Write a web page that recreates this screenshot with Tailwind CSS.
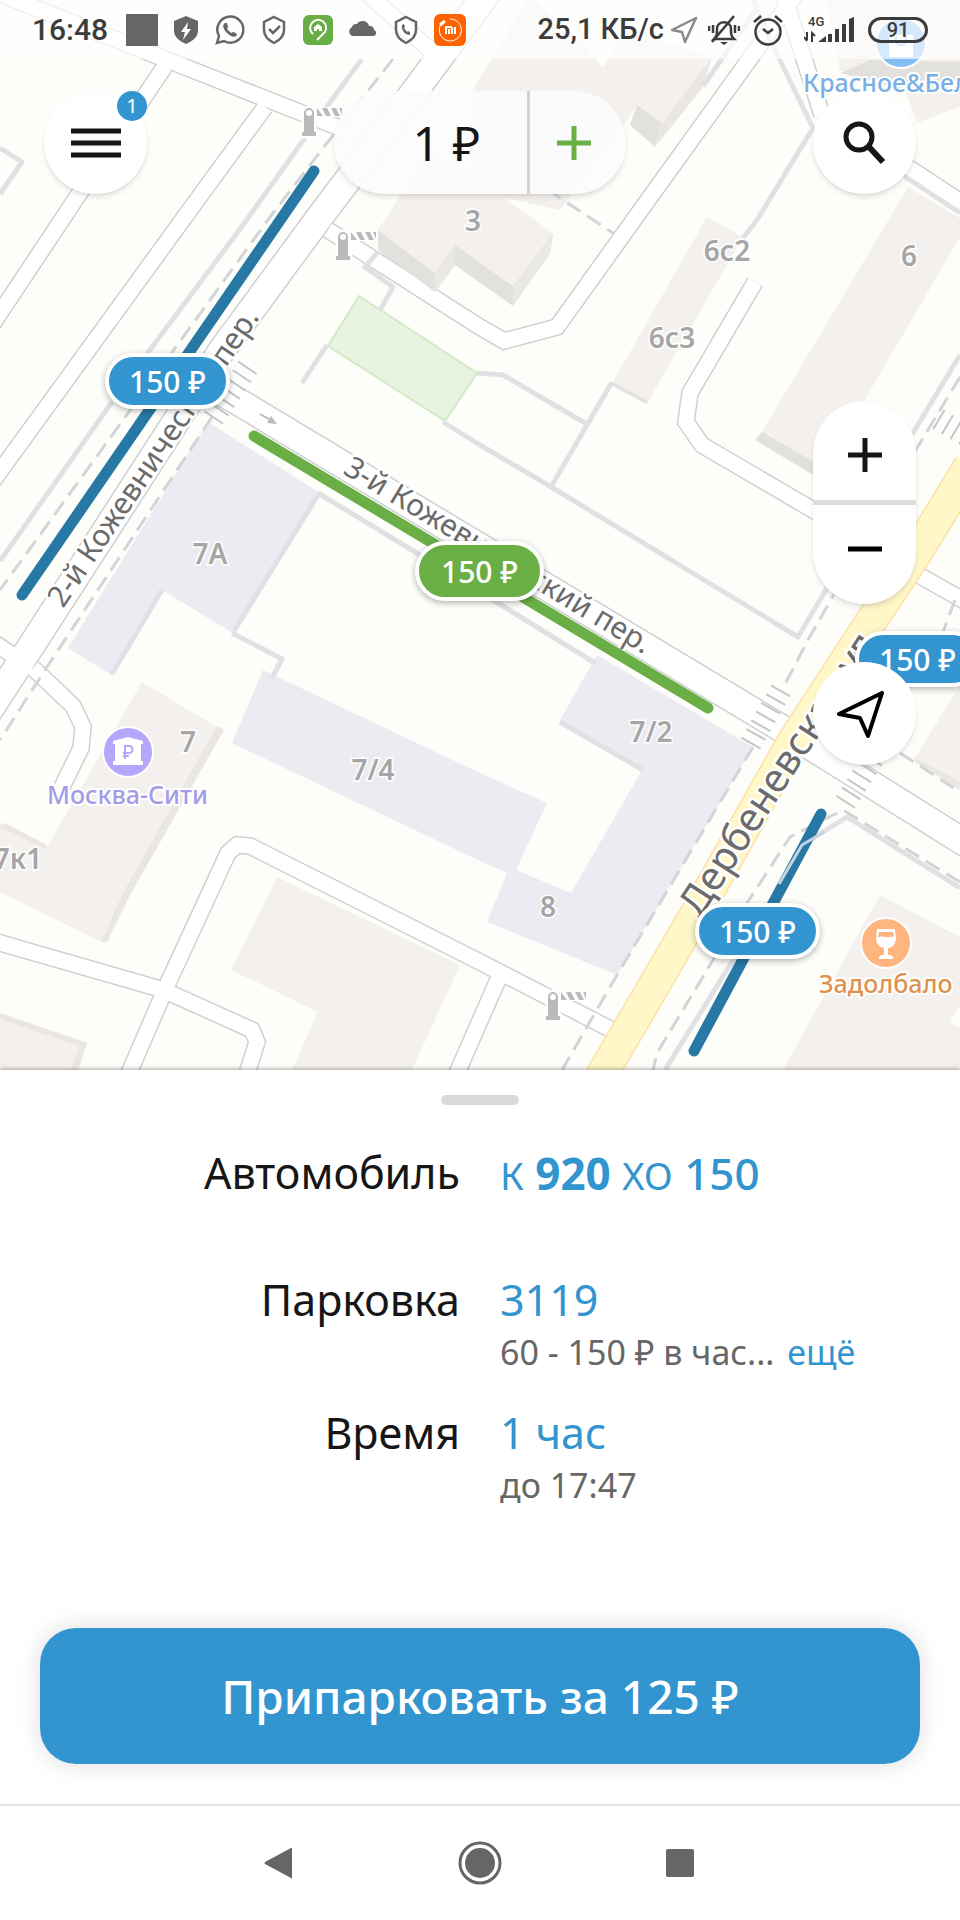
<!DOCTYPE html>
<html lang="ru">
<head>
    <meta charset="UTF-8">
    <meta name="viewport" content="width=device-width, initial-scale=1.0">
    <title>Парковки</title>
    <script src="https://cdn.jsdelivr.net/npm/@tailwindcss/browser@4"></script>
</head>
<body class="bg-white font-['Noto_Sans','Open_Sans',sans-serif] text-[#161616]">
<div class="flex min-h-screen flex-col">

    <!-- Карта -->
    <section class="relative min-h-[1070px] grow overflow-hidden bg-[#fdfefa]" aria-label="Карта парковок">
        <div class="absolute inset-y-0 left-1/2 w-[960px] -translate-x-1/2">
            <svg class="block h-[1070px] w-[960px]" viewBox="0 0 960 1070" fill="none">
                <defs>
                    <symbol id="barrier" viewBox="0 0 42 32" overflow="visible">
                        <path d="M3 26V7a5 5 0 0 1 10 0v19h2v4H1v-4z" fill="#b9babc" stroke="#fff" stroke-width="5" paint-order="stroke"/>
                        <circle cx="8" cy="7" r="3" fill="#fff"/>
                        <path d="M15 1h27v10H15z" fill="#fff"/>
                        <path d="M16 2v8h6zM21 2h5l4 8h-5zM30 2h5l4 8h-5zM38 2h3v7z" fill="#b9babc"/>
                    </symbol>
                    <g id="lanes">
                        <path d="M-10 -10 185 67 350 132"/>
                        <path d="M165 66 75 200-10 328"/>
                        <path d="M265 107 197 200-10 485"/>
                        <path d="M-10 640 20 660"/>
                        <path d="M33 668 73 706 83 727 81 748 62 787"/>
                        <path d="M328 230 480 327 504 341 557 327 648 200 749 60 795-5"/>
                        <path d="M755 282 690 393 686 422 702 445 813 510 840 525"/>
                        <path d="M915 573 970 604"/>
                        <path d="M-10 940 157 988 172 994 252 1030 257 1042 245 1080"/>
                        <path d="M126 1080 168 983 228 853 237 845 250 846 480 962 612 1030"/>
                        <path d="M454 1080 500 975"/>
                        <path d="M782-10 822 115"/>
                        <path d="M900 162 970 208"/>
                        <path d="M330-40 430 50"/>
                    </g>
                    <g id="streets">
                        <path d="M500-24 414 92 319 218 222 350 35 640-30 740"/>
                        <path d="M212 386 480 547 786 731 970 846"/>
                    </g>
                </defs>

                <!-- Здания -->
                <g fill="#f4f0ed">
                    <path d="M470 95 530-5 585 45 603 68 625 30 712 57 662 123 637 105 620 130 560 210 470 190z"/>
                    <path d="M707 217 743 237 648 402 613 382z"/>
                    <path d="M908 187 960 218 960 237 825 468 762 432z"/>
                    <path d="M825-5H965V105L917 123 905 90 840 70z"/>
                    <path d="M142 682 217 727 102 942 0 892V823L47 847z"/>
                    <path d="M0 1013 87 1043 78 1070H0z"/>
                    <path d="M277 877 460 965 412 1070H292L318 1012 231 970z"/>
                    <path d="M880 895 960 937V1005L950 1022 960 1028V1070H783z"/>
                    <path d="M915 758 960 685V785z"/>
                </g>
                <g fill="#e3e1de">
                    <path d="M637 105 662 123 655 147 630 125z"/>
                    <path d="M762 432 755 440 818 478 825 468z"/>
                    <path d="M613 382 611 385 646 404 648 401z"/>
                    <path d="M840 73 870 60 960 62V80L905 90z"/>
                </g>
                <g fill="#e9e6e3">
                    <path d="M662 123 712 57 703 87 655 147z"/>
                    <path d="M217 726 224 730 130 895 107 942H101L123 893z"/>
                    <path d="M0 1013 87 1043 78 1070H71L79 1046 0 1019z"/>
                    <path d="M5 823 47 845 46 849 0 827z"/>
                    <path d="M915 758 960 781V790L915 762z"/>
                </g>
                <g fill="#ebebf1">
                    <path d="M208 422 320 493 233 633 162 590 112 675 68 648z"/>
                    <path d="M263 670 480 773 547 803 516 870 571 893 642 770 560 720 597 655 753 747 617 975 487 922 507 873 480 861 232 743z"/>
                </g>
                <path d="M318 495 234 631M162 590 112 674M560 722 643 770" stroke="#e0e0e5" stroke-width="5"/>
                <path d="M359 296 477 373 445 421 328 346z" fill="#e8f3e1" stroke="#d1eac5" stroke-width="2"/>

                <!-- Дороги: контур, затем полотно -->
                <use href="#lanes" stroke="#d0d0d3" stroke-width="18"/>
                <use href="#streets" stroke="#d0d0d3" stroke-width="29"/>
                <use href="#lanes" stroke="#fff" stroke-width="15"/>
                <use href="#streets" stroke="#fff" stroke-width="26"/>
                <path d="M600 1078 698 910 792 743 872 620 917 552 970 465" stroke="#ffdfa6" stroke-width="33"/>
                <path d="M600 1078 698 910 792 743 872 620 917 552 970 465" stroke="#fff7c8" stroke-width="30"/>

                <!-- Здание 3 стоит поверх проезда -->
                <path d="M378 230 430 150 480 180 507 200 553 233 513 286 455 245 435 273z" fill="#f4f0ed"/>
                <path d="M378 230V250L435 292 455 265 513 306 550 253 553 233 513 286 455 245 435 273z" fill="#e3e1de"/>
                <path d="M435 273 455 245V265L435 292zM513 286 553 233 550 253 513 306z" fill="#e9e8e5"/>

                <!-- Заборы -->
                <g stroke="#e1e0e4" stroke-width="5" stroke-linejoin="round">
                    <path d="M362 59 325 109M307 135 243 225 147 354M112 402 0 561"/>
                    <path d="M0 148 22 162 0 194"/>
                    <path d="M378 252 365 267 393 287 380 310"/>
                    <path d="M327 345 302 383"/>
                    <path d="M443 422 480 445 548 485 798 637 827 588"/>
                    <path d="M477 373 503 375 585 423M612 382 552 485"/>
                    <path d="M743 238 757 220 813 128 775 50 753 0M758 7 703 86"/>
                    <path d="M318 493 420 555 595 663"/>
                    <path d="M232 633 282 659 272 678"/>
                    <path d="M960 355 913 433 845 545"/>
                    <path d="M904 176 960 213"/>
                    <path d="M960 888 847 817 802 845 768 905 730 965 665 1070"/>
                </g>

                <!-- Тротуары -->
                <g stroke="#d2d5d7" stroke-width="3" stroke-dasharray="16 8">
                    <path d="M393 59 327 143 270 217 0 590"/>
                    <path d="M212 417 45 670 0 740"/>
                    <path d="M528 175 563 200 613 233"/>
                    <path d="M960 377 917 448 808 640 782 690"/>
                    <path d="M753 747 617 975 562 1070"/>
                    <path d="M960 882 843 810 790 837 747 903 713 960 657 1053 653 1070"/>
                    <path d="M900 753 960 792M955 600 938 645"/>
                </g>

                <!-- Пешеходные переходы -->
                <path d="M248 367 211 422M781 690 750 745M884 742 843 806M938 419 975 441" stroke="#c0c7cb" stroke-width="22" stroke-dasharray="2 8"/>
                <path d="M260 414 274 422" stroke="#b9babc" stroke-width="2"/>
                <path d="M277 424 267 423 271 416z" fill="#b9babc"/>

                <use href="#barrier" x="301" y="106" width="42" height="32"/>
                <use href="#barrier" x="335" y="230" width="42" height="32"/>
                <use href="#barrier" x="545" y="990" width="42" height="32"/>

                <!-- Улицы -->
                <g fill="#6b6b6b" stroke="#fff" stroke-width="5" stroke-linejoin="round" paint-order="stroke" font-size="30">
                    <text transform="translate(63 609) rotate(-56)">2-й Кожевнический пер.</text>
                    <text transform="translate(342 473) rotate(31)">3-й Кожевнический пер.</text>
                    <text transform="translate(700 919) rotate(-57)" font-size="40">Дербеневская ул.</text>
                </g>

                <!-- Парковочные зоны -->
                <g stroke-width="11" stroke-linecap="round">
                    <path d="M314 171 22 595M821 814 694 1051" stroke="#2778a5"/>
                    <path d="M254 436 708 708" stroke="#6aaf45"/>
                </g>
                <path d="M824 832 802 845 779 884" stroke="#c5d5e0" stroke-width="3"/>

                <!-- Подписи домов -->
                <g fill="#a6a6a6" stroke="#fff" stroke-width="3" paint-order="stroke" font-size="28" font-weight="600" text-anchor="middle">
                    <text x="473" y="231">3</text>
                    <text x="727" y="261">6с2</text>
                    <text x="672" y="348">6с3</text>
                    <text x="909" y="266">6</text>
                    <text x="210" y="564">7А</text>
                    <text x="188" y="752">7</text>
                    <text x="373" y="780">7/4</text>
                    <text x="651" y="742">7/2</text>
                    <text x="548" y="917">8</text>
                    <text x="18" y="869">7к1</text>
                </g>

                <!-- Организации -->
                <g stroke="#fff" stroke-width="2">
                    <circle cx="128" cy="752" r="25" fill="#b5a5fb"/>
                    <circle cx="886" cy="943" r="25" fill="#ffb580"/>
                    <circle cx="901" cy="43" r="25" fill="#87bdf5"/>
                </g>
                <path d="M113 744V741L128 737 143 741V744H141V761H143V765H113V761H115V744z" fill="#fff"/>
                <path d="M125 759V746H129a3 3 0 0 1 0 7H123M123 756H129" stroke="#b5a5fb" stroke-width="2"/>
                <path d="M877 929H895L896 938C896 944 892 948 888 948V955C892 955 893 956 893 959H879C879 956 880 955 884 955V948C880 948 876 944 876 938zM879 932 878 937C882 935 889 939 894 936L893 932z" fill="#fff" fill-rule="evenodd"/>
                <path d="M889 35H913V57H889z" fill="#fff"/>
                <path d="M896 36V40a5 5 0 0 0 10 0V36" stroke="#87bdf5" stroke-width="2"/>
                <g stroke="#fff" stroke-width="4" stroke-linejoin="round" paint-order="stroke" font-size="25" font-weight="500">
                    <text x="47" y="804" fill="#a49be8">Москва-Сити</text>
                    <text x="819" y="993" fill="#dc9350">Задолбало</text>
                    <text x="803" y="92" fill="#7ab0e5">Красное&amp;Бел</text>
                </g>
            </svg>

            <!-- Цены на карте -->
            <button class="absolute left-[105px] top-[353px] h-14 w-[125px] rounded-full border-4 border-white bg-[#3295cf] pt-px text-3xl leading-none font-medium text-white shadow-[0_2px_6px_rgba(0,0,0,0.3)]">150 ₽</button>
            <button class="absolute left-[415px] top-[541px] h-[60px] w-[129px] rounded-full border-4 border-white bg-[#6aaf45] pt-px text-3xl leading-none font-medium text-white shadow-[0_2px_6px_rgba(0,0,0,0.3)]">150 ₽</button>
            <button class="absolute left-[695px] top-[903px] h-14 w-[125px] rounded-full border-4 border-white bg-[#3295cf] pt-px text-3xl leading-none font-medium text-white shadow-[0_2px_6px_rgba(0,0,0,0.3)]">150 ₽</button>
            <button class="absolute left-[855px] top-[631px] h-14 w-[125px] rounded-full border-4 border-white bg-[#3295cf] pt-px text-3xl leading-none font-medium text-white shadow-[0_2px_6px_rgba(0,0,0,0.3)]">150 ₽</button>
        </div>

        <!-- Элементы управления поверх карты -->
        <div class="relative">
            <div class="flex h-[59px] items-center justify-between bg-white/65 px-8 font-[Roboto,sans-serif] text-[#3c3c3c]">
                <div class="flex items-center gap-3">
                    <span class="mr-1.5 text-[30px] leading-none font-medium">16:48</span>
                    <span class="size-8 bg-[#666]"></span>
                    <svg class="size-8" viewBox="0 0 32 32"><path d="M16 2 28 7v9c0 7-5 11-12 14C9 27 4 23 4 16V7z" fill="#666"/><path d="M18 8 11 18h4l-2 8 8-11h-4z" fill="#fff"/></svg>
                    <svg class="size-8" viewBox="0 0 32 32" fill="none"><path d="M3 29l2-7a13 13 0 1 1 5 5z" stroke="#666" stroke-width="2.5"/><path d="M11 9c-3 2-2 6 2 10s8 5 10 2l-1-2-3-1-2 1-4-4 1-2-1-4z" fill="#666"/></svg>
                    <svg class="size-8" viewBox="0 0 32 32" fill="none" stroke="#666" stroke-width="2.5"><path d="M16 3 26 8v8c0 6-4 10-10 13C10 26 6 22 6 16V8z"/><path d="M11 15l4 4 7-7"/></svg>
                    <svg class="size-8" viewBox="0 0 32 32" fill="none"><rect x="1" y="1" width="30" height="30" rx="6" fill="#68ad45"/><path d="M11 20a8 8 0 1 1 12-2l-8 8" stroke="#fff" stroke-width="2"/><path d="M16 10l4 3v4h-3v-2h-2v2h-3v-4z" fill="#fff"/></svg>
                    <svg class="size-8" viewBox="0 0 32 32"><path d="M6 22a5 5 0 0 1 0-9c1-3 3-3 5-3 3-5 11-3 12 2 4 0 5 2 5 4 3 1 3 6-1 6z" fill="#666"/></svg>
                    <svg class="size-8" viewBox="0 0 32 32" fill="none"><path d="M16 3 26 8v8c0 6-4 10-10 13C10 26 6 22 6 16V8z" stroke="#666" stroke-width="2.5"/><path d="M12 11c-1 5 3 10 8 10v-3l-2-1-1 1-3-4 1-1-1-3z" fill="#666"/></svg>
                    <svg class="size-8" viewBox="0 0 32 32" fill="none" stroke="#fff"><rect width="32" height="32" rx="6" fill="#ff6200" stroke="none"/><path d="M10 7a11 11 0 1 0 6-2" stroke-width="1"/><path d="M6 11l5-4" stroke-width="3"/><path d="M12 20v-7h4q2 0 2 2v5M15 15v5M21 13v7" stroke-width="2"/></svg>
                </div>
                <div class="flex items-center gap-3">
                    <span class="text-[29px] leading-none font-medium">25,1 КБ/с</span>
                    <svg class="-mr-1 -ml-2 size-8" viewBox="0 0 32 32" fill="none"><path d="M28 4 4 16l10 2 3 10z" stroke="#8a8a8a" stroke-width="2.5" stroke-linejoin="round"/></svg>
                    <svg class="size-8" viewBox="0 0 32 32" fill="none" stroke="#3c3c3c" stroke-width="2.5"><path d="M6 25c3-3 3-5 3-10 0-9 14-9 14 0 0 5 0 7 3 10zM26 2 4 28M5 11v8M1 12v5M27 11v8M31 12v5"/><path d="M12 28h8l-4 3z" fill="#3c3c3c" stroke="none"/></svg>
                    <svg class="size-8" viewBox="0 0 32 32" fill="none" stroke="#3c3c3c" stroke-width="2.5"><circle cx="16" cy="18" r="12.5"/><path d="M11 15l5 4 5-4M2 8l7-6M30 8l-7-6"/></svg>
                    <svg class="ml-2 h-8 w-[52px]" viewBox="0 0 52 32" fill="#3c3c3c"><text x="4" y="12" font-size="13" font-weight="500">4G</text><path d="M3 18v8M3 27l-3-4M8 28V19l3 3" fill="none" stroke="#3c3c3c" stroke-width="2"/><path d="M14 28l8-6v6zM24 20h4v8h-4zM31 15h4v13h-4zM38 10h4v18h-4zM45 5l5-2v25h-5z"/></svg>
                    <span class="flex h-[26px] w-[60px] items-center justify-center rounded-full border-[3px] text-xl leading-none font-medium">91</span>
                </div>
            </div>

            <div class="flex justify-between px-11 pt-8">
                <button class="relative flex size-[103px] items-center justify-center rounded-full bg-white shadow-md" aria-label="Меню">
                    <svg class="h-8 w-[50px]" viewBox="0 0 50 32" stroke="#161616" stroke-width="5"><path d="M0 4h50M0 16h50M0 28h50"/></svg>
                    <span class="absolute top-0 right-0 flex size-[30px] items-center justify-center rounded-full bg-[#3295cf] text-xl leading-none text-white">1</span>
                </button>
                <div class="flex h-[103px] w-[292px] rounded-full bg-[#fcfcfc]/90 shadow-md">
                    <button class="grow border-r-[3px] border-[#d3d3d3] pl-8 text-5xl">1 ₽</button>
                    <button class="flex w-[96px] items-center justify-center pr-2" aria-label="Пополнить">
                        <svg class="size-[34px]" viewBox="0 0 34 34" stroke="#6aaf45" stroke-width="5"><path d="M17 0v34M0 17h34"/></svg>
                    </button>
                </div>
                <button class="flex size-[103px] items-center justify-center rounded-full bg-white shadow-md" aria-label="Поиск">
                    <svg class="size-11" viewBox="0 0 44 44" fill="none" stroke="#161616" stroke-width="5"><circle cx="16" cy="16" r="13"/><path d="M26 26 40 41" stroke-width="6"/></svg>
                </button>
            </div>

            <div class="mt-[207px] flex flex-col items-end gap-[58px] px-11">
                <div class="flex w-[103px] flex-col gap-[5px] rounded-full bg-[#dcdcd8] shadow-md">
                    <button class="flex h-[99px] items-center justify-center rounded-t-full bg-white pt-2" aria-label="Приблизить">
                        <svg class="size-[34px]" viewBox="0 0 34 34" stroke="#161616" stroke-width="5"><path d="M17 0v34M0 17h34"/></svg>
                    </button>
                    <button class="flex h-[99px] items-center justify-center rounded-b-full bg-white pb-3" aria-label="Отдалить">
                        <svg class="size-[34px]" viewBox="0 0 34 34" stroke="#000" stroke-width="5"><path d="M0 17h34"/></svg>
                    </button>
                </div>
                <button class="flex size-[103px] items-center justify-center rounded-full bg-white shadow-md" aria-label="Моё местоположение">
                    <svg class="-ml-2 size-12" viewBox="0 0 48 48" fill="none" stroke="#000" stroke-width="4" stroke-linejoin="round"><path d="M45 3 2 24 23 28 31 46z"/></svg>
                </button>
            </div>
        </div>
    </section>

    <!-- Панель оплаты -->
    <section class="relative bg-white shadow-[0_-1px_4px_rgba(0,0,0,0.35)]">
        <div class="mx-auto mt-[25px] h-[10px] w-[78px] rounded-full bg-[#d9d9d9]"></div>

        <dl class="mt-[43px] grid grid-cols-2 gap-x-10 leading-[50px]">
            <dt class="pb-[77px] text-right text-[43px]">Автомобиль</dt>
            <dd class="text-[44px] font-medium text-[#3295cf]"><span class="text-[38px] font-normal">К</span> <b class="font-bold">920</b> <span class="text-[38px] font-normal">ХО</span> 150</dd>

            <dt class="text-right text-[43px]">Парковка</dt>
            <dd class="pb-7">
                <div class="text-[43px] text-[#3295cf]">3119</div>
                <div class="text-[34px] leading-[55px] text-[#666]">60 - 150 ₽ в час... <a href="#" class="ml-1 text-[#3295cf]">ещё</a></div>
            </dd>

            <dt class="text-right text-[43px]">Время</dt>
            <dd>
                <div class="text-[43px] text-[#3295cf]">1 час</div>
                <div class="text-[34px] leading-[55px] text-[#666]">до 17:47</div>
            </dd>
        </dl>

        <div class="px-10 pt-[115px] pb-10">
            <button class="h-[136px] w-full rounded-[36px] bg-[#3295cf] pt-px text-[46px] font-medium text-white shadow-[0_0_24px_rgba(0,0,0,0.14)]">Припарковать за 125 ₽</button>
        </div>
    </section>

    <!-- Системная навигация -->
    <nav class="flex h-[116px] items-center justify-center border-t-2 border-[#f3f3f3] bg-white">
        <button class="flex w-[200px] justify-center" aria-label="Назад">
            <svg class="h-8 w-8" viewBox="0 0 32 32" fill="#666"><path d="M28 1v30q0 1-1 0L1 17q-1-1 0-2L27 1q1-1 1 0z"/></svg>
        </button>
        <button class="flex w-[200px] justify-center" aria-label="Домой">
            <svg class="size-11" viewBox="0 0 44 44" fill="#666"><circle cx="22" cy="22" r="20" fill="none" stroke="#666" stroke-width="3"/><circle cx="22" cy="22" r="15"/></svg>
        </button>
        <button class="flex w-[200px] justify-center" aria-label="Недавние">
            <span class="size-7 rounded-xs bg-[#666]"></span>
        </button>
    </nav>
</div>
</body>
</html>
